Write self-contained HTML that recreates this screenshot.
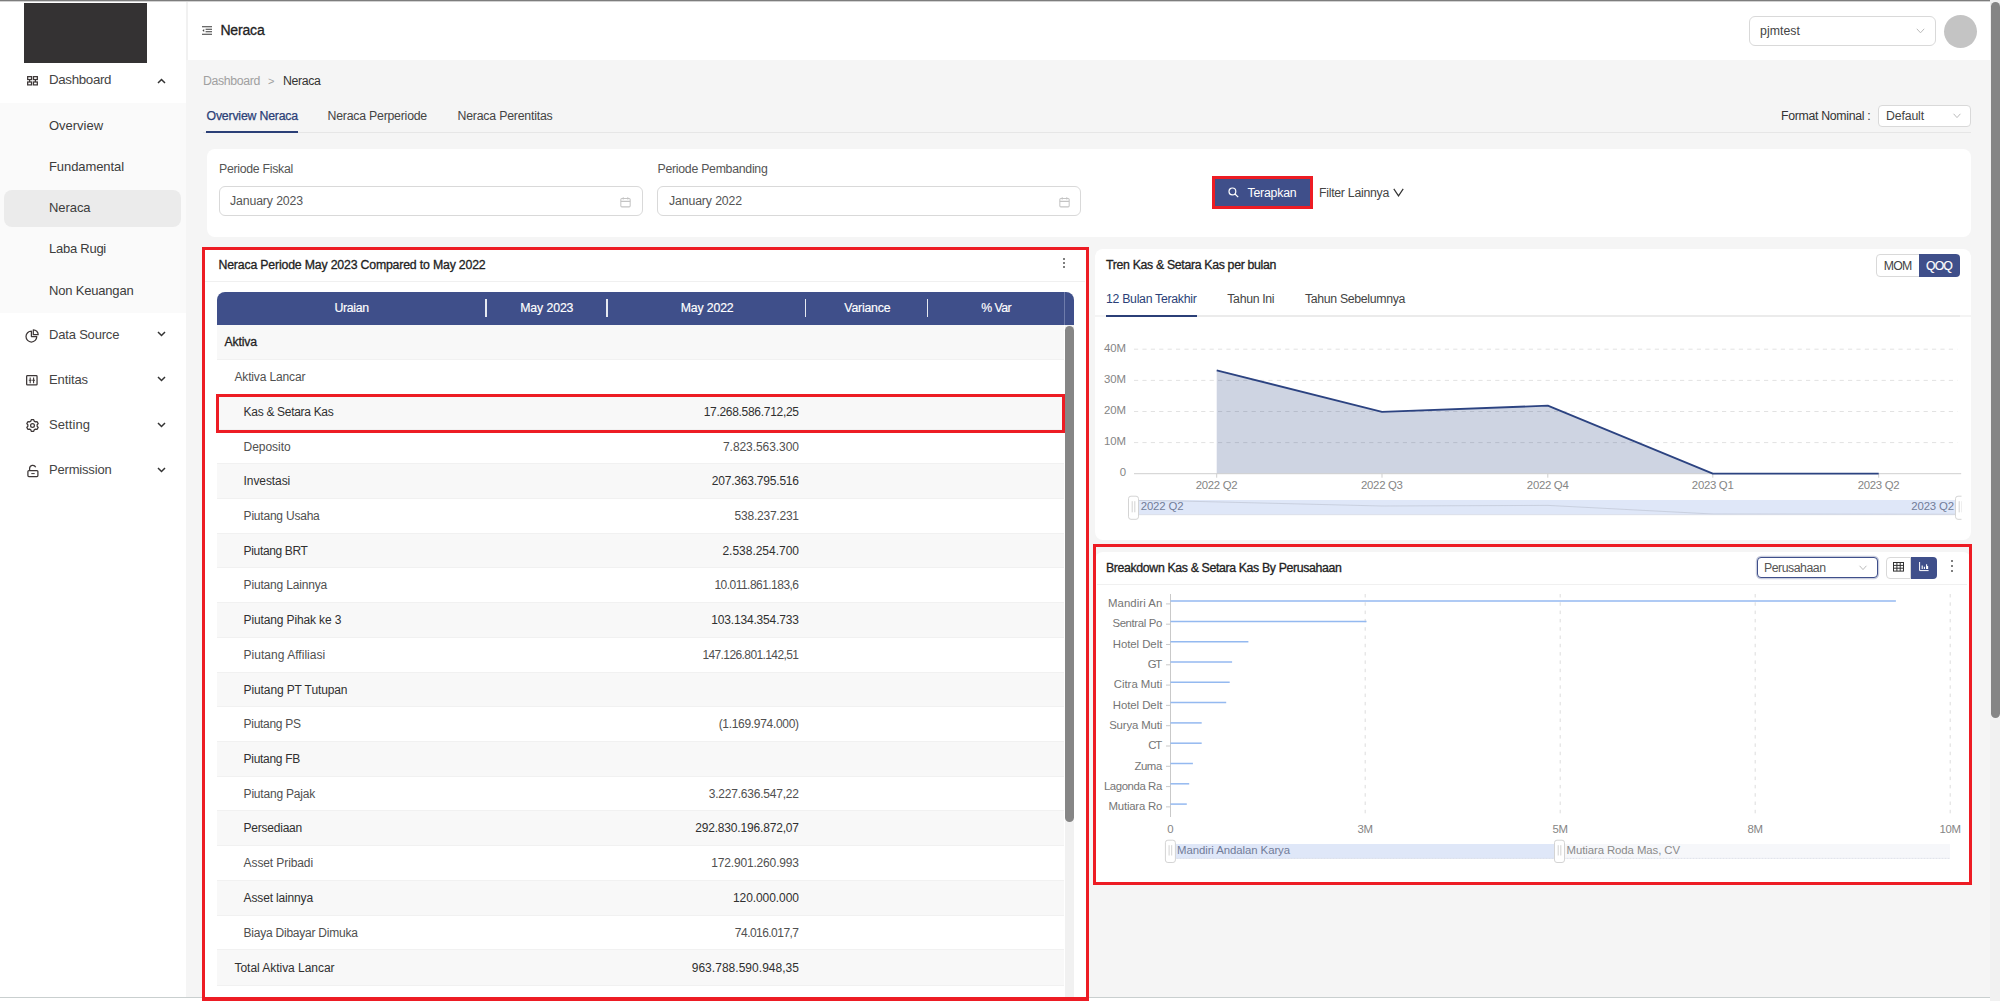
<!DOCTYPE html>
<html lang="id"><head><meta charset="utf-8"><title>Neraca</title>
<style>
html,body{margin:0;padding:0;}
body{width:2000px;height:1001px;position:relative;overflow:hidden;background:#f5f5f5;font-family:"Liberation Sans",sans-serif;}
.b{position:absolute;box-sizing:border-box;}
.t{position:absolute;white-space:pre;}
svg{position:absolute;overflow:visible;}
svg text{font-family:"Liberation Sans",sans-serif;}
</style></head><body>
<div class="b" style="left:0px;top:0px;width:186px;height:1001px;background:#ffffff;"></div>
<div class="b" style="left:186px;top:0px;width:1804px;height:60px;background:#ffffff;"></div>
<div class="b" style="left:186px;top:0px;width:2px;height:60px;background:#f1f1f1;"></div>
<div class="b" style="left:0px;top:0px;width:2000px;height:1px;background:#7d7d7d;"></div>
<div class="b" style="left:0px;top:1px;width:2000px;height:1px;background:#d2d2d2;"></div>
<div class="b" style="left:0px;top:997px;width:1990px;height:1px;background:#c9cfcf;"></div>
<div class="b" style="left:0px;top:998px;width:2000px;height:3px;background:#ffffff;"></div>
<div class="b" style="left:1990px;top:0px;width:10px;height:1001px;background:#f1f1f1;"></div>
<div class="b" style="left:1991px;top:1.5px;width:9px;height:716.5px;background:#858585;border-radius:4.5px;"></div>
<div class="b" style="left:24px;top:3px;width:123px;height:60px;background:#343233;"></div>
<svg style="left:26.8px;top:76px" width="11" height="9.6" viewBox="0 0 11 9.6" fill="none" stroke="#3d3737" stroke-width="1.25"><rect x=".65" y=".65" width="3.9" height="2.9"/><rect x="6.45" y=".65" width="3.9" height="2.9"/><rect x=".65" y="6" width="3.9" height="2.9"/><rect x="6.45" y="6" width="3.9" height="2.9"/><path d="M2.6 3.5v2.5M8.4 3.5v2.5"/></svg>
<span class="t" style="left:49.00px;top:70.00px;font-size:13.3px;line-height:20px;color:#444;letter-spacing:-0.318px;">Dashboard</span>
<svg style="left:156.5px;top:77.6px" width="9" height="6" viewBox="0 0 9 6" fill="none" stroke="#333" stroke-width="1.5"><path d="M1 5l3.5-3.5L8 5"/></svg>
<div class="b" style="left:0px;top:103px;width:186px;height:210px;background:#fafafa;"></div>
<div class="b" style="left:4px;top:190px;width:177px;height:37px;background:#ebebeb;border-radius:8px;"></div>
<span class="t" style="left:49.00px;top:115.50px;font-size:13px;line-height:20px;color:#3c3c3c;letter-spacing:-0.023px;">Overview</span>
<span class="t" style="left:49.00px;top:156.70px;font-size:13px;line-height:20px;color:#3c3c3c;letter-spacing:-0.081px;">Fundamental</span>
<span class="t" style="left:49.00px;top:198.30px;font-size:13px;line-height:20px;color:#3c3c3c;letter-spacing:-0.070px;">Neraca</span>
<span class="t" style="left:49.00px;top:238.70px;font-size:13px;line-height:20px;color:#3c3c3c;letter-spacing:-0.253px;">Laba Rugi</span>
<span class="t" style="left:49.00px;top:280.60px;font-size:13px;line-height:20px;color:#3c3c3c;letter-spacing:-0.188px;">Non Keuangan</span>
<span class="t" style="left:49.00px;top:324.80px;font-size:13px;line-height:20px;color:#444;letter-spacing:-0.188px;">Data Source</span>
<svg style="left:156.5px;top:331.40000000000003px" width="9" height="6" viewBox="0 0 9 6" fill="none" stroke="#333" stroke-width="1.5"><path d="M1 1l3.5 3.5L8 1"/></svg>
<span class="t" style="left:49.00px;top:369.80px;font-size:13px;line-height:20px;color:#444;letter-spacing:-0.107px;">Entitas</span>
<svg style="left:156.5px;top:376.40000000000003px" width="9" height="6" viewBox="0 0 9 6" fill="none" stroke="#333" stroke-width="1.5"><path d="M1 1l3.5 3.5L8 1"/></svg>
<span class="t" style="left:49.00px;top:415.20px;font-size:13px;line-height:20px;color:#444;letter-spacing:0.074px;">Setting</span>
<svg style="left:156.5px;top:421.8px" width="9" height="6" viewBox="0 0 9 6" fill="none" stroke="#333" stroke-width="1.5"><path d="M1 1l3.5 3.5L8 1"/></svg>
<span class="t" style="left:49.00px;top:460.20px;font-size:13px;line-height:20px;color:#444;letter-spacing:-0.180px;">Permission</span>
<svg style="left:156.5px;top:466.8px" width="9" height="6" viewBox="0 0 9 6" fill="none" stroke="#333" stroke-width="1.5"><path d="M1 1l3.5 3.5L8 1"/></svg>
<svg style="left:25px;top:328.5px" width="14" height="14" viewBox="0 0 14 14" fill="none" stroke="#3d3737" stroke-width="1.25" stroke-linejoin="round"><path d="M6.4 2.2A5.4 5.4 0 1 0 11.8 7.6H6.4z"/><path d="M8.3 .8v4.9h4.9A4.9 4.9 0 0 0 8.3 .8z"/></svg>
<svg style="left:26.3px;top:375.2px" width="12" height="11" viewBox="0 0 12 11" fill="none" stroke="#3d3737" stroke-width="1.25"><rect x=".65" y=".65" width="10.4" height="9.3" rx=".8"/><path d="M4.2 2.4v5.8M7.6 2.4v5.8M2.8 5.3h2.8M6.2 5.3H9" stroke-width="1.1"/></svg>
<svg style="left:25.7px;top:419.2px" width="13" height="13" viewBox="0 0 13 13" fill="none" stroke="#3d3737" stroke-width="1.25" stroke-linejoin="round"><path d="M4.84 2.10 L5.31 0.62 L7.69 0.62 L8.16 2.10 L9.48 2.87 L11.00 2.53 L12.19 4.59 L11.14 5.73 L11.14 7.27 L12.19 8.41 L11.00 10.47 L9.48 10.13 L8.16 10.90 L7.69 12.38 L5.31 12.38 L4.84 10.90 L3.52 10.13 L2.00 10.47 L0.81 8.41 L1.86 7.27 L1.86 5.73 L0.81 4.59 L2.00 2.53 L3.52 2.87Z"/><circle cx="6.5" cy="6.5" r="1.9"/></svg>
<svg style="left:26.5px;top:463.5px" width="12" height="14" viewBox="0 0 12 14" fill="none" stroke="#3d3737" stroke-width="1.25"><rect x=".9" y="6.6" width="10" height="6" rx="1"/><path d="M2.6 6.6V4.4a3.2 3.2 0 0 1 6.1-1.2"/><path d="M4.3 9.6h3.4" stroke-width="1"/></svg>
<svg style="left:202.4px;top:25.7px" width="10" height="9" viewBox="0 0 10 9" fill="none" stroke="#3a3a3a" stroke-width="1.1"><path d="M0 .8h10M3.6 3.3H10M3.6 5.7H10M0 8.2h10"/><path d="M2.2 2.9L.4 4.5l1.8 1.6z" fill="#444" stroke="none"/></svg>
<span class="t" style="left:220.40px;top:20.10px;font-size:14px;line-height:21px;color:#222;letter-spacing:-0.157px;-webkit-text-stroke:0.3px #222;">Neraca</span>
<div class="b" style="left:1749px;top:16px;width:187px;height:30px;background:#fff;border:1px solid #d9d9d9;border-radius:6px;"></div>
<span class="t" style="left:1760.00px;top:21.50px;font-size:12.3px;line-height:18px;color:#444;letter-spacing:0.051px;">pjmtest</span>
<svg style="left:1916px;top:28px" width="9" height="6" viewBox="0 0 9 6" fill="none" stroke="#bbb" stroke-width="1"><path d="M.8 .8l3.7 4 3.7-4"/></svg>
<div class="b" style="left:1944px;top:15px;width:33px;height:33px;background:#c4c4c4;border-radius:50%;"></div>
<span class="t" style="left:203.00px;top:71.50px;font-size:12.3px;line-height:18px;color:#a0a0a0;letter-spacing:-0.352px;">Dashboard</span>
<span class="t" style="left:268.00px;top:72.50px;font-size:11px;line-height:16px;color:#a0a0a0;letter-spacing:-0.330px;">&gt;</span>
<span class="t" style="left:283.00px;top:71.50px;font-size:12.3px;line-height:18px;color:#333;letter-spacing:-0.359px;">Neraca</span>
<span class="t" style="left:206.50px;top:107.00px;font-size:12.3px;line-height:18px;color:#2b3f77;letter-spacing:-0.188px;-webkit-text-stroke:0.25px #2b3f77;">Overview Neraca</span>
<span class="t" style="left:327.50px;top:107.00px;font-size:12.3px;line-height:18px;color:#444;letter-spacing:-0.219px;">Neraca Perperiode</span>
<span class="t" style="left:457.50px;top:107.00px;font-size:12.3px;line-height:18px;color:#444;letter-spacing:-0.202px;">Neraca Perentitas</span>
<div class="b" style="left:203px;top:132px;width:1768px;height:1px;background:#e6e6e6;"></div>
<div class="b" style="left:206px;top:131px;width:92px;height:2px;background:#2b3f77;"></div>
<span class="t" style="left:1781.00px;top:107.00px;font-size:12.3px;line-height:18px;color:#333;letter-spacing:-0.301px;">Format Nominal :</span>
<div class="b" style="left:1878px;top:105px;width:93px;height:22px;background:#fff;border:1px solid #d9d9d9;border-radius:4px;"></div>
<span class="t" style="left:1886.00px;top:107.00px;font-size:12.3px;line-height:18px;color:#444;letter-spacing:-0.138px;">Default</span>
<svg style="left:1953px;top:113px" width="8" height="6" viewBox="0 0 8 6" fill="none" stroke="#bbb" stroke-width="1"><path d="M.6 .8l3.4 3.8L7.4 .8"/></svg>
<div class="b" style="left:207px;top:149px;width:1764px;height:88px;background:#fff;border-radius:8px;"></div>
<span class="t" style="left:219.00px;top:160.00px;font-size:12.3px;line-height:18px;color:#555;letter-spacing:-0.280px;">Periode Fiskal</span>
<div class="b" style="left:218.8px;top:186.2px;width:423.99999999999994px;height:30.200000000000017px;background:#fff;border:1px solid #d9d9d9;border-radius:6px;"></div>
<span class="t" style="left:230.00px;top:192.40px;font-size:12.3px;line-height:18px;color:#555;letter-spacing:-0.128px;">January 2023</span>
<span class="t" style="left:657.50px;top:160.00px;font-size:12.3px;line-height:18px;color:#555;letter-spacing:-0.270px;">Periode Pembanding</span>
<div class="b" style="left:657.3px;top:186.2px;width:424.0px;height:30.200000000000017px;background:#fff;border:1px solid #d9d9d9;border-radius:6px;"></div>
<span class="t" style="left:669.00px;top:192.40px;font-size:12.3px;line-height:18px;color:#555;letter-spacing:-0.128px;">January 2022</span>
<svg style="left:620px;top:196.6px" width="11" height="10.4" viewBox="0 0 10 10" fill="none" stroke="#c4c4c4" stroke-width="1"><rect x=".5" y="1.5" width="9" height="8" rx="1"/><path d="M.5 4.2h9M2.8 .3v2.2M7.2 .3v2.2"/></svg>
<svg style="left:1059px;top:196.6px" width="11" height="10.4" viewBox="0 0 10 10" fill="none" stroke="#c4c4c4" stroke-width="1"><rect x=".5" y="1.5" width="9" height="8" rx="1"/><path d="M.5 4.2h9M2.8 .3v2.2M7.2 .3v2.2"/></svg>
<div class="b" style="left:1212px;top:176px;width:101px;height:33px;background:#3f4f8a;border:3px solid #ed1c24;"></div>
<svg style="left:1228px;top:186.8px" width="11" height="11" viewBox="0 0 11 11" fill="none" stroke="#fff" stroke-width="1.2"><circle cx="4.4" cy="4.4" r="3.4"/><path d="M7 7l3.2 3.2"/></svg>
<span class="t" style="left:1247.50px;top:183.50px;font-size:12.3px;line-height:18px;color:#fff;letter-spacing:-0.199px;">Terapkan</span>
<span class="t" style="left:1319.00px;top:183.50px;font-size:12.3px;line-height:18px;color:#444;letter-spacing:-0.273px;">Filter Lainnya</span>
<svg style="left:1393px;top:188px" width="11" height="9" viewBox="0 0 11 9" fill="none" stroke="#333" stroke-width="1.2"><path d="M.8 .8L5.5 7.8 10.2 .8"/></svg>
<div class="b" style="left:202.4px;top:246.8px;width:886.4px;height:754.2px;background:#fff;border:3.4px solid #ed1c24;border-bottom-width:4.2px;"></div>
<span class="t" style="left:218.50px;top:256.00px;font-size:12.3px;line-height:18px;color:#222;letter-spacing:-0.177px;-webkit-text-stroke:0.3px #222;">Neraca Periode May 2023 Compared to May 2022</span>
<div class="b" style="left:1063px;top:258px;width:2px;height:2px;background:#555;border-radius:50%;"></div>
<div class="b" style="left:1063px;top:262px;width:2px;height:2px;background:#555;border-radius:50%;"></div>
<div class="b" style="left:1063px;top:266px;width:2px;height:2px;background:#555;border-radius:50%;"></div>
<div class="b" style="left:205px;top:281px;width:880px;height:1px;background:#f0f0f0;"></div>
<div class="b" style="left:217px;top:292px;width:857px;height:33px;background:#3f4f8a;border-radius:8px 8px 0 0;"></div>
<div class="b" style="left:485.45px;top:299px;width:1.5px;height:18px;background:#e6e9f1;"></div>
<div class="b" style="left:606.05px;top:299px;width:1.5px;height:18px;background:#e6e9f1;"></div>
<div class="b" style="left:804.95px;top:299px;width:1.5px;height:18px;background:#e6e9f1;"></div>
<div class="b" style="left:926.75px;top:299px;width:1.5px;height:18px;background:#e6e9f1;"></div>
<div class="b" style="left:1063.5px;top:292px;width:1.0px;height:33px;background:#6f7cab;"></div>
<span class="t" style="left:334.45px;top:299.00px;font-size:12.3px;line-height:18px;color:#fff;letter-spacing:-0.306px;-webkit-text-stroke:0.15px #fff;">Uraian</span>
<span class="t" style="left:520.24px;top:299.00px;font-size:12.3px;line-height:18px;color:#fff;letter-spacing:-0.114px;-webkit-text-stroke:0.15px #fff;">May 2023</span>
<span class="t" style="left:680.72px;top:299.00px;font-size:12.3px;line-height:18px;color:#fff;letter-spacing:-0.152px;-webkit-text-stroke:0.15px #fff;">May 2022</span>
<span class="t" style="left:844.30px;top:299.00px;font-size:12.3px;line-height:18px;color:#fff;letter-spacing:-0.203px;-webkit-text-stroke:0.15px #fff;">Variance</span>
<span class="t" style="left:981.30px;top:299.00px;font-size:12.3px;line-height:18px;color:#fff;letter-spacing:-0.596px;-webkit-text-stroke:0.15px #fff;">% Var</span>
<div class="b" style="left:217px;top:324.5px;width:847px;height:35.5px;background:#f8f8f8;"></div>
<div class="b" style="left:217px;top:359px;width:847px;height:1px;background:#f1f1f1;"></div>
<span class="t" style="left:224.40px;top:332.85px;font-size:12.3px;line-height:18px;color:#1f1f1f;letter-spacing:-0.150px;-webkit-text-stroke:0.3px #1f1f1f;">Aktiva</span>
<div class="b" style="left:217px;top:394px;width:847px;height:1px;background:#f1f1f1;"></div>
<span class="t" style="left:234.40px;top:368.10px;font-size:12px;line-height:18px;color:#505050;letter-spacing:-0.131px;">Aktiva Lancar</span>
<div class="b" style="left:217px;top:395px;width:847px;height:35px;background:#f8f8f8;"></div>
<div class="b" style="left:217px;top:429px;width:847px;height:1px;background:#f1f1f1;"></div>
<span class="t" style="left:243.60px;top:403.10px;font-size:12px;line-height:18px;color:#303030;letter-spacing:-0.307px;">Kas &amp; Setara Kas</span>
<span class="t" style="left:703.70px;top:403.10px;font-size:12px;line-height:18px;color:#303030;letter-spacing:-0.301px;">17.268.586.712,25</span>
<div class="b" style="left:217px;top:463px;width:847px;height:1px;background:#f1f1f1;"></div>
<span class="t" style="left:243.60px;top:437.60px;font-size:12px;line-height:18px;color:#505050;letter-spacing:-0.047px;">Deposito</span>
<span class="t" style="left:723.03px;top:437.60px;font-size:12px;line-height:18px;color:#505050;letter-spacing:-0.065px;">7.823.563.300</span>
<div class="b" style="left:217px;top:464px;width:847px;height:35px;background:#f8f8f8;"></div>
<div class="b" style="left:217px;top:498px;width:847px;height:1px;background:#f1f1f1;"></div>
<span class="t" style="left:243.60px;top:472.10px;font-size:12px;line-height:18px;color:#303030;letter-spacing:-0.084px;">Investasi</span>
<span class="t" style="left:711.79px;top:472.10px;font-size:12px;line-height:18px;color:#303030;letter-spacing:-0.206px;">207.363.795.516</span>
<div class="b" style="left:217px;top:533px;width:847px;height:1px;background:#f1f1f1;"></div>
<span class="t" style="left:243.60px;top:507.10px;font-size:12px;line-height:18px;color:#505050;letter-spacing:-0.210px;">Piutang Usaha</span>
<span class="t" style="left:734.57px;top:507.10px;font-size:12px;line-height:18px;color:#505050;letter-spacing:-0.230px;">538.237.231</span>
<div class="b" style="left:217px;top:534px;width:847px;height:34px;background:#f8f8f8;"></div>
<div class="b" style="left:217px;top:567px;width:847px;height:1px;background:#f1f1f1;"></div>
<span class="t" style="left:243.60px;top:541.60px;font-size:12px;line-height:18px;color:#303030;letter-spacing:-0.348px;">Piutang BRT</span>
<span class="t" style="left:722.48px;top:541.60px;font-size:12px;line-height:18px;color:#303030;letter-spacing:-0.019px;">2.538.254.700</span>
<div class="b" style="left:217px;top:602px;width:847px;height:1px;background:#f1f1f1;"></div>
<span class="t" style="left:243.60px;top:576.10px;font-size:12px;line-height:18px;color:#505050;letter-spacing:-0.179px;">Piutang Lainnya</span>
<span class="t" style="left:714.47px;top:576.10px;font-size:12px;line-height:18px;color:#505050;letter-spacing:-0.533px;">10.011.861.183,6</span>
<div class="b" style="left:217px;top:603px;width:847px;height:35px;background:#f8f8f8;"></div>
<div class="b" style="left:217px;top:637px;width:847px;height:1px;background:#f1f1f1;"></div>
<span class="t" style="left:243.60px;top:611.10px;font-size:12px;line-height:18px;color:#303030;letter-spacing:-0.138px;">Piutang Pihak ke 3</span>
<span class="t" style="left:711.23px;top:611.10px;font-size:12px;line-height:18px;color:#303030;letter-spacing:-0.166px;">103.134.354.733</span>
<div class="b" style="left:217px;top:672px;width:847px;height:1px;background:#f1f1f1;"></div>
<span class="t" style="left:243.60px;top:646.10px;font-size:12px;line-height:18px;color:#505050;letter-spacing:0.025px;">Piutang Affiliasi</span>
<span class="t" style="left:702.40px;top:646.10px;font-size:12px;line-height:18px;color:#505050;letter-spacing:-0.599px;">147.126.801.142,51</span>
<div class="b" style="left:217px;top:673px;width:847px;height:34px;background:#f8f8f8;"></div>
<div class="b" style="left:217px;top:706px;width:847px;height:1px;background:#f1f1f1;"></div>
<span class="t" style="left:243.60px;top:680.60px;font-size:12px;line-height:18px;color:#303030;letter-spacing:-0.114px;">Piutang PT Tutupan</span>
<div class="b" style="left:217px;top:741px;width:847px;height:1px;background:#f1f1f1;"></div>
<span class="t" style="left:243.60px;top:715.10px;font-size:12px;line-height:18px;color:#505050;letter-spacing:-0.305px;">Piutang PS</span>
<span class="t" style="left:718.68px;top:715.10px;font-size:12px;line-height:18px;color:#505050;letter-spacing:-0.316px;">(1.169.974.000)</span>
<div class="b" style="left:217px;top:742px;width:847px;height:35px;background:#f8f8f8;"></div>
<div class="b" style="left:217px;top:776px;width:847px;height:1px;background:#f1f1f1;"></div>
<span class="t" style="left:243.60px;top:750.10px;font-size:12px;line-height:18px;color:#303030;letter-spacing:-0.298px;">Piutang FB</span>
<div class="b" style="left:217px;top:810px;width:847px;height:1px;background:#f1f1f1;"></div>
<span class="t" style="left:243.60px;top:784.60px;font-size:12px;line-height:18px;color:#505050;letter-spacing:-0.205px;">Piutang Pajak</span>
<span class="t" style="left:708.79px;top:784.60px;font-size:12px;line-height:18px;color:#505050;letter-spacing:-0.214px;">3.227.636.547,22</span>
<div class="b" style="left:217px;top:811px;width:847px;height:35px;background:#f8f8f8;"></div>
<div class="b" style="left:217px;top:845px;width:847px;height:1px;background:#f1f1f1;"></div>
<span class="t" style="left:243.60px;top:819.10px;font-size:12px;line-height:18px;color:#303030;letter-spacing:-0.232px;">Persediaan</span>
<span class="t" style="left:695.13px;top:819.10px;font-size:12px;line-height:18px;color:#303030;letter-spacing:-0.171px;">292.830.196.872,07</span>
<div class="b" style="left:217px;top:880px;width:847px;height:1px;background:#f1f1f1;"></div>
<span class="t" style="left:243.60px;top:854.10px;font-size:12px;line-height:18px;color:#505050;letter-spacing:-0.100px;">Asset Pribadi</span>
<span class="t" style="left:711.23px;top:854.10px;font-size:12px;line-height:18px;color:#505050;letter-spacing:-0.166px;">172.901.260.993</span>
<div class="b" style="left:217px;top:881px;width:847px;height:35px;background:#f8f8f8;"></div>
<div class="b" style="left:217px;top:915px;width:847px;height:1px;background:#f1f1f1;"></div>
<span class="t" style="left:243.60px;top:889.10px;font-size:12px;line-height:18px;color:#303030;letter-spacing:-0.152px;">Asset lainnya</span>
<span class="t" style="left:732.93px;top:889.10px;font-size:12px;line-height:18px;color:#303030;letter-spacing:-0.067px;">120.000.000</span>
<div class="b" style="left:217px;top:949px;width:847px;height:1px;background:#f1f1f1;"></div>
<span class="t" style="left:243.60px;top:923.60px;font-size:12px;line-height:18px;color:#505050;letter-spacing:-0.236px;">Biaya Dibayar Dimuka</span>
<span class="t" style="left:734.86px;top:923.60px;font-size:12px;line-height:18px;color:#505050;letter-spacing:-0.540px;">74.016.017,7</span>
<div class="b" style="left:217px;top:950px;width:847px;height:36px;background:#f8f8f8;"></div>
<div class="b" style="left:217px;top:985px;width:847px;height:1px;background:#f1f1f1;"></div>
<span class="t" style="left:234.50px;top:958.60px;font-size:12px;line-height:18px;color:#303030;letter-spacing:-0.039px;">Total Aktiva Lancar</span>
<span class="t" style="left:691.73px;top:958.60px;font-size:12px;line-height:18px;color:#303030;letter-spacing:0.029px;">963.788.590.948,35</span>
<div class="b" style="left:216px;top:393.6px;width:849.0999999999999px;height:39.39999999999998px;border:3.4px solid #ed1c24;"></div>
<div class="b" style="left:1065px;top:325px;width:9px;height:672px;background:#f1f1f1;"></div>
<div class="b" style="left:1065.3px;top:326.4px;width:8.700000000000045px;height:495.6px;background:#868686;border-radius:4.5px;"></div>
<div class="b" style="left:1095px;top:249px;width:876px;height:291px;background:#fff;border-radius:8px;"></div>
<span class="t" style="left:1106.00px;top:256.00px;font-size:12.3px;line-height:18px;color:#222;letter-spacing:-0.323px;-webkit-text-stroke:0.3px #222;">Tren Kas &amp; Setara Kas per bulan</span>
<div class="b" style="left:1876px;top:254px;width:44px;height:23px;background:#fff;border:1px solid #d9d9d9;border-radius:4px 0 0 4px;"></div>
<div class="b" style="left:1919px;top:254px;width:41px;height:23px;background:#3f4f8a;border-radius:0 4px 4px 0;"></div>
<span class="t" style="left:1883.66px;top:256.50px;font-size:12.3px;line-height:18px;color:#444;letter-spacing:-0.688px;">MOM</span>
<span class="t" style="left:1926.05px;top:256.50px;font-size:12.3px;line-height:18px;color:#fff;letter-spacing:-0.901px;-webkit-text-stroke:0.15px #fff;">QOQ</span>
<span class="t" style="left:1106.00px;top:290.00px;font-size:12.3px;line-height:18px;color:#2b3f77;letter-spacing:-0.293px;">12 Bulan Terakhir</span>
<span class="t" style="left:1227.30px;top:290.00px;font-size:12.3px;line-height:18px;color:#444;letter-spacing:-0.325px;">Tahun Ini</span>
<span class="t" style="left:1305.00px;top:290.00px;font-size:12.3px;line-height:18px;color:#444;letter-spacing:-0.330px;">Tahun Sebelumnya</span>
<div class="b" style="left:1095px;top:315px;width:876px;height:2px;background:#f4f4f4;"></div>
<div class="b" style="left:1106px;top:315px;width:853.5px;height:2px;background:#ebebeb;"></div>
<div class="b" style="left:1106px;top:314.5px;width:91px;height:2.0px;background:#2b3f77;"></div>
<svg style="left:0;top:0" width="2000" height="1001"><defs><clipPath id="cl1"><rect x="1900" y="480" width="61.5" height="60"/></clipPath></defs><path d="M1134 349.2H1957.5" stroke="#e2e2e2" stroke-width="1" stroke-dasharray="4.2 4.2"/><path d="M1134 380.4H1957.5" stroke="#e2e2e2" stroke-width="1" stroke-dasharray="4.2 4.2"/><path d="M1134 411.5H1957.5" stroke="#e2e2e2" stroke-width="1" stroke-dasharray="4.2 4.2"/><path d="M1134 442.6H1957.5" stroke="#e2e2e2" stroke-width="1" stroke-dasharray="4.2 4.2"/><path d="M1216.7 370.4 L1382 411.8 L1547.8 405.7 L1712.8 473.7 L1878.7 473.7 L1878.7 473.7 L1216.7 473.7Z" fill="#2c4381" fill-opacity="0.23"/><path d="M1134 473.7H1961.2" stroke="#cfcfcf" stroke-width="1"/><path d="M1216.7 473.7v4" stroke="#cfcfcf" stroke-width="1"/><path d="M1382 473.7v4" stroke="#cfcfcf" stroke-width="1"/><path d="M1547.8 473.7v4" stroke="#cfcfcf" stroke-width="1"/><path d="M1712.8 473.7v4" stroke="#cfcfcf" stroke-width="1"/><path d="M1878.7 473.7v4" stroke="#cfcfcf" stroke-width="1"/><path d="M1216.7 370.4 L1382 411.8 L1547.8 405.7 L1712.8 473.7 L1878.7 473.7" fill="none" stroke="#2c4381" stroke-width="1.8" stroke-linejoin="round"/><rect x="1134" y="500" width="826" height="14.7" fill="#dfe7f8"/><path d="M1134 500.4 L1180 501 L1382 506 L1548 505.4 L1713 514 L1960 514.3" fill="none" stroke="#c3c9d8" stroke-width="0.8"/><path d="M1134 514.7H1960" stroke="#d5d9e3" stroke-width="0.8"/><rect x="1128.5" y="496.2" width="10" height="23.099999999999966" rx="2.5" fill="#fff" stroke="#d4d4d4" stroke-width="1"/><path d="M1132.2 501.2V512.3M1134.8 501.2V512.3" stroke="#c8c8c8" stroke-width="0.8"/><g clip-path="url(#cl1)"><rect x="1955.5" y="496.2" width="10" height="23.099999999999966" rx="2.5" fill="#fff" stroke="#d4d4d4" stroke-width="1"/><path d="M1959.2 501.2V512.3M1961.8 501.2V512.3" stroke="#c8c8c8" stroke-width="0.8"/></g></svg>
<span class="t" style="left:1103.94px;top:339.50px;font-size:11.4px;line-height:17px;color:#858585;letter-spacing:-0.057px;">40M</span>
<span class="t" style="left:1103.94px;top:370.70px;font-size:11.4px;line-height:17px;color:#858585;letter-spacing:-0.057px;">30M</span>
<span class="t" style="left:1103.94px;top:401.80px;font-size:11.4px;line-height:17px;color:#858585;letter-spacing:-0.057px;">20M</span>
<span class="t" style="left:1103.94px;top:432.90px;font-size:11.4px;line-height:17px;color:#858585;letter-spacing:-0.057px;">10M</span>
<span class="t" style="left:1119.66px;top:464.00px;font-size:11.4px;line-height:17px;color:#858585;letter-spacing:-0.342px;">0</span>
<span class="t" style="left:1195.75px;top:476.90px;font-size:11.4px;line-height:17px;color:#858585;letter-spacing:-0.300px;">2022 Q2</span>
<span class="t" style="left:1361.05px;top:476.90px;font-size:11.4px;line-height:17px;color:#858585;letter-spacing:-0.300px;">2022 Q3</span>
<span class="t" style="left:1526.85px;top:476.90px;font-size:11.4px;line-height:17px;color:#858585;letter-spacing:-0.300px;">2022 Q4</span>
<span class="t" style="left:1691.85px;top:476.90px;font-size:11.4px;line-height:17px;color:#858585;letter-spacing:-0.300px;">2023 Q1</span>
<span class="t" style="left:1857.75px;top:476.90px;font-size:11.4px;line-height:17px;color:#858585;letter-spacing:-0.300px;">2023 Q2</span>
<span class="t" style="left:1140.80px;top:497.50px;font-size:11.4px;line-height:17px;color:#717c98;letter-spacing:-0.172px;">2022 Q2</span>
<span class="t" style="left:1911.33px;top:497.50px;font-size:11.4px;line-height:17px;color:#717c98;letter-spacing:-0.172px;">2023 Q2</span>
<div class="b" style="left:1095px;top:552px;width:876px;height:332px;background:#fff;border-radius:8px 8px 0 0;"></div>
<div class="b" style="left:1092.5px;top:544px;width:879.5px;height:341px;border:3.4px solid #ed1c24;"></div>
<span class="t" style="left:1106.00px;top:558.50px;font-size:12.3px;line-height:18px;color:#222;letter-spacing:-0.350px;-webkit-text-stroke:0.3px #222;">Breakdown Kas &amp; Setara Kas By Perusahaan</span>
<div class="b" style="left:1097px;top:584px;width:870px;height:1px;background:#f0f0f0;"></div>
<div class="b" style="left:1756.5px;top:557.3px;width:121.0px;height:21.200000000000045px;background:#fff;border:1.5px solid #3f4f8a;border-radius:4px;box-shadow:0 0 0 1.2px rgba(63,79,138,0.28);"></div>
<span class="t" style="left:1764.00px;top:558.70px;font-size:12.3px;line-height:18px;color:#555;letter-spacing:-0.483px;">Perusahaan</span>
<svg style="left:1859px;top:565px" width="8" height="6" viewBox="0 0 8 6" fill="none" stroke="#bbb" stroke-width="1"><path d="M.6 .8l3.4 3.8L7.4 .8"/></svg>
<div class="b" style="left:1885.5px;top:557px;width:25.5px;height:21.600000000000023px;background:#fff;border:1px solid #d9d9d9;border-radius:4px 0 0 4px;"></div>
<div class="b" style="left:1910.7px;top:557px;width:26.59999999999991px;height:21.600000000000023px;background:#3f4f8a;border-radius:0 4px 4px 0;"></div>
<svg style="left:1893px;top:562.4px" width="11" height="9.6" viewBox="0 0 11 9.6" fill="none" stroke="#333" stroke-width="1"><rect x=".5" y=".5" width="10" height="8.6"/><path d="M.5 3.4h10M.5 6.2h10M3.9 .5v8.6M7.2 .5v8.6"/></svg>
<svg style="left:1919px;top:562.4px" width="10" height="10" viewBox="0 0 10 10" fill="none" stroke="#fff" stroke-width="1"><path d="M.6 0v8.6h9"/><path d="M3.2 7V3.4M5.4 7V4.8M7.6 7V2.2M8.6 7V4" stroke-width="1.1"/></svg>
<div class="b" style="left:1951px;top:560px;width:2px;height:2px;background:#555;border-radius:50%;"></div>
<div class="b" style="left:1951px;top:565.2px;width:2px;height:2.0px;background:#555;border-radius:50%;"></div>
<div class="b" style="left:1951px;top:570.3px;width:2px;height:2.0px;background:#555;border-radius:50%;"></div>
<span class="t" style="left:1108.05px;top:595.10px;font-size:11.4px;line-height:17px;color:#757575;letter-spacing:0.047px;">Mandiri An</span>
<span class="t" style="left:1112.43px;top:615.40px;font-size:11.4px;line-height:17px;color:#757575;letter-spacing:-0.370px;">Sentral Po</span>
<span class="t" style="left:1112.75px;top:635.70px;font-size:11.4px;line-height:17px;color:#757575;letter-spacing:-0.052px;">Hotel Delt</span>
<span class="t" style="left:1147.67px;top:656.00px;font-size:11.4px;line-height:17px;color:#757575;letter-spacing:-1.200px;">GT</span>
<span class="t" style="left:1113.78px;top:676.30px;font-size:11.4px;line-height:17px;color:#757575;letter-spacing:-0.023px;">Citra Muti</span>
<span class="t" style="left:1112.75px;top:696.60px;font-size:11.4px;line-height:17px;color:#757575;letter-spacing:-0.052px;">Hotel Delt</span>
<span class="t" style="left:1109.15px;top:716.90px;font-size:11.4px;line-height:17px;color:#757575;letter-spacing:-0.145px;">Surya Muti</span>
<span class="t" style="left:1148.31px;top:737.20px;font-size:11.4px;line-height:17px;color:#757575;letter-spacing:-1.200px;">CT</span>
<span class="t" style="left:1134.39px;top:757.50px;font-size:11.4px;line-height:17px;color:#757575;letter-spacing:-0.406px;">Zuma</span>
<span class="t" style="left:1103.89px;top:777.80px;font-size:11.4px;line-height:17px;color:#757575;letter-spacing:-0.408px;">Lagonda Ra</span>
<span class="t" style="left:1108.58px;top:798.10px;font-size:11.4px;line-height:17px;color:#757575;letter-spacing:-0.222px;">Mutiara Ro</span>
<svg style="left:0;top:0" width="2000" height="1001"><path d="M1365.2 594V817" stroke="#dcdcdc" stroke-width="1" stroke-dasharray="3.5 4.8"/><path d="M1560.2 594V817" stroke="#dcdcdc" stroke-width="1" stroke-dasharray="3.5 4.8"/><path d="M1755.2 594V817" stroke="#dcdcdc" stroke-width="1" stroke-dasharray="3.5 4.8"/><path d="M1950.2 594V817" stroke="#dcdcdc" stroke-width="1" stroke-dasharray="3.5 4.8"/><path d="M1170.5 594V817" stroke="#c9c9c9" stroke-width="1"/><path d="M1166.0 603.90H1170.5" stroke="#c9c9c9" stroke-width="1"/><path d="M1170.5 601.10H1895.9" stroke="#94b9f0" stroke-width="1.5"/><path d="M1166.0 624.20H1170.5" stroke="#c9c9c9" stroke-width="1"/><path d="M1170.5 621.40H1366.5" stroke="#94b9f0" stroke-width="1.5"/><path d="M1166.0 644.50H1170.5" stroke="#c9c9c9" stroke-width="1"/><path d="M1170.5 641.70H1248.4" stroke="#94b9f0" stroke-width="1.5"/><path d="M1166.0 664.80H1170.5" stroke="#c9c9c9" stroke-width="1"/><path d="M1170.5 662.00H1232.1" stroke="#94b9f0" stroke-width="1.5"/><path d="M1166.0 685.10H1170.5" stroke="#c9c9c9" stroke-width="1"/><path d="M1170.5 682.30H1229.7" stroke="#94b9f0" stroke-width="1.5"/><path d="M1166.0 705.40H1170.5" stroke="#c9c9c9" stroke-width="1"/><path d="M1170.5 702.60H1226.2" stroke="#94b9f0" stroke-width="1.5"/><path d="M1166.0 725.70H1170.5" stroke="#c9c9c9" stroke-width="1"/><path d="M1170.5 722.90H1201.7" stroke="#94b9f0" stroke-width="1.5"/><path d="M1166.0 746.00H1170.5" stroke="#c9c9c9" stroke-width="1"/><path d="M1170.5 743.20H1201.7" stroke="#94b9f0" stroke-width="1.5"/><path d="M1166.0 766.30H1170.5" stroke="#c9c9c9" stroke-width="1"/><path d="M1170.5 763.50H1192.9" stroke="#94b9f0" stroke-width="1.5"/><path d="M1166.0 786.60H1170.5" stroke="#c9c9c9" stroke-width="1"/><path d="M1170.5 783.80H1189.2" stroke="#94b9f0" stroke-width="1.5"/><path d="M1166.0 806.90H1170.5" stroke="#c9c9c9" stroke-width="1"/><path d="M1170.5 804.10H1186.8" stroke="#94b9f0" stroke-width="1.5"/><rect x="1170.5" y="844" width="779.5" height="14.7" fill="#f6f7fa"/><rect x="1170.5" y="844" width="389" height="14.7" fill="#dfe7f8"/><path d="M1170.5 858.4H1950" stroke="#d9dce6" stroke-width="0.8" stroke-dasharray="2 1"/><rect x="1165.4" y="840.2" width="10" height="22.299999999999955" rx="2.5" fill="#fff" stroke="#d4d4d4" stroke-width="1"/><path d="M1169.1000000000001 845.2V855.5M1171.7 845.2V855.5" stroke="#c8c8c8" stroke-width="0.8"/><rect x="1554.5" y="840.2" width="10" height="22.299999999999955" rx="2.5" fill="#fff" stroke="#d4d4d4" stroke-width="1"/><path d="M1558.2 845.2V855.5M1560.8 845.2V855.5" stroke="#c8c8c8" stroke-width="0.8"/></svg>
<span class="t" style="left:1167.13px;top:820.80px;font-size:11.4px;line-height:17px;color:#858585;letter-spacing:-0.342px;">0</span>
<span class="t" style="left:1357.56px;top:820.80px;font-size:11.4px;line-height:17px;color:#858585;letter-spacing:-0.342px;">3M</span>
<span class="t" style="left:1552.56px;top:820.80px;font-size:11.4px;line-height:17px;color:#858585;letter-spacing:-0.342px;">5M</span>
<span class="t" style="left:1747.56px;top:820.80px;font-size:11.4px;line-height:17px;color:#858585;letter-spacing:-0.342px;">8M</span>
<span class="t" style="left:1939.56px;top:820.80px;font-size:11.4px;line-height:17px;color:#858585;letter-spacing:-0.342px;">10M</span>
<span class="t" style="left:1177.00px;top:841.50px;font-size:11.4px;line-height:17px;color:#717c98;letter-spacing:-0.077px;">Mandiri Andalan Karya</span>
<span class="t" style="left:1566.50px;top:841.50px;font-size:11.4px;line-height:17px;color:#8a8a8a;letter-spacing:-0.086px;">Mutiara Roda Mas, CV</span>
</body></html>
